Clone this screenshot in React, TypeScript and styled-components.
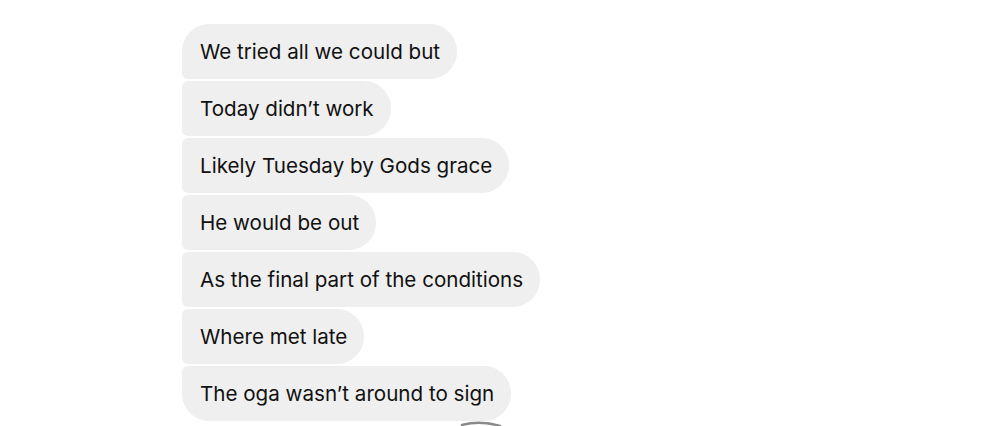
import React from "react";
import styled, { createGlobalStyle } from "styled-components";

const Global = createGlobalStyle`
  html, body { margin: 0; padding: 0; background: #ffffff; }
  body { font-family: Inter, "Noto Sans", sans-serif; }
`;

const Page = styled.div`
  position: relative;
  width: 992px;
  height: 426px;
  overflow: hidden;
  background: #ffffff;
  padding: 24px 0 0 182px;
  box-sizing: border-box;
  display: flex;
  flex-direction: column;
  align-items: flex-start;
  gap: 2px;
`;

type Pos = "first" | "middle" | "last";

const Bubble = styled.div<{ $pos: Pos }>`
  background: #efefef;
  color: #111111;
  font-size: 20.6px;
  line-height: 55px;
  height: 55px;
  padding: 0 17px 0 18px;
  box-sizing: border-box;
  white-space: nowrap;
  border-radius: ${({ $pos }) =>
    $pos === "first"
      ? "27px 27px 27px 6px"
      : $pos === "last"
      ? "6px 27px 27px 27px"
      : "6px 27px 27px 6px"};
`;

const CutEdge = styled.svg`
  position: absolute;
  left: 456px;
  top: 419px;
  width: 50px;
  height: 8px;
`;

const messages = [
  "We tried all we could but",
  "Today didn\u2019t work",
  "Likely Tuesday by Gods grace",
  "He would be out",
  "As the final part of the conditions",
  "Where met late",
  "The oga wasn\u2019t around to sign",
];

export default function App() {
  return (
    <>
      <Global />
      <Page>
        {messages.map((m, i) => (
          <Bubble
            key={i}
            $pos={i === 0 ? "first" : i === messages.length - 1 ? "last" : "middle"}
          >
            {m}
          </Bubble>
        ))}
        <CutEdge viewBox="0 0 50 8">
          <path d="M6 6 Q24 1 44 7" stroke="#8a8a8a" strokeWidth="2.5" fill="none" strokeLinecap="round" />
        </CutEdge>
      </Page>
    </>
  );
}
